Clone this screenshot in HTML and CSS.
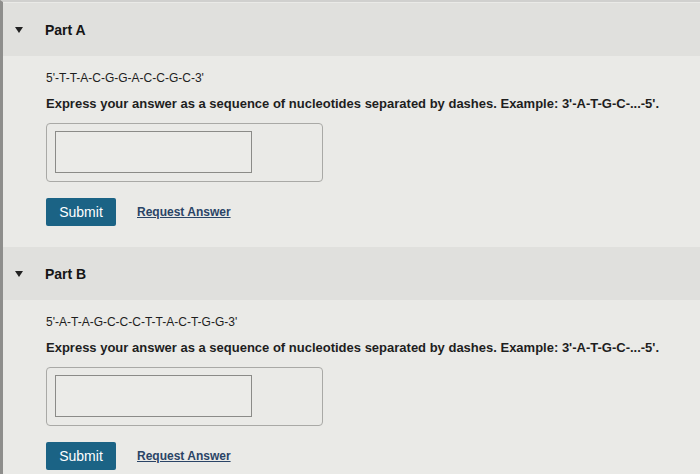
FILE: index.html
```html
<!DOCTYPE html>
<html lang="en">
<head>
    <meta charset="UTF-8">
    <meta name="viewport" content="width=device-width, initial-scale=1.0">
    <title>Parts A and B</title>
    <link rel="stylesheet" href="styles.css">
</head>
<body>
    <div class="page">
        <!-- Part A -->
        <section class="part">
            <div class="part-head">
                <span class="caret"></span>
                <h3>Part A</h3>
            </div>
            <div class="part-body">
                <p class="seq">5'-T-T-A-C-G-G-A-C-C-G-C-3'</p>
                <p class="prompt">Express your answer as a sequence of nucleotides separated by dashes. Example: 3'-A-T-G-C-...-5'.</p>
                <div class="answer-box">
                    <input type="text" class="answer">
                </div>
                <div class="actions">
                    <button class="submit-btn">Submit</button>
                    <a href="#" class="request">Request Answer</a>
                </div>
            </div>
        </section>

        <!-- Part B -->
        <section class="part">
            <div class="part-head">
                <span class="caret"></span>
                <h3>Part B</h3>
            </div>
            <div class="part-body">
                <p class="seq">5'-A-T-A-G-C-C-C-T-T-A-C-T-G-G-3'</p>
                <p class="prompt">Express your answer as a sequence of nucleotides separated by dashes. Example: 3'-A-T-G-C-...-5'.</p>
                <div class="answer-box">
                    <input type="text" class="answer">
                </div>
                <div class="actions">
                    <button class="submit-btn">Submit</button>
                    <a href="#" class="request">Request Answer</a>
                </div>
            </div>
        </section>
    </div>
</body>
</html>
```
FILE: styles.css
```css
body {
    margin: 0;
    padding: 0;
    font-family: "Liberation Sans", Arial, sans-serif;
    background: #eaeae7;
    color: #1e1e1e;
}

.page {
    border-left: 3px solid #8e8e8c;
    border-top: 2px solid #d0d0ce;
    min-height: 472px;
}

.part-head {
    display: flex;
    align-items: center;
    height: 53px;
    margin-top: 1px;
    padding-left: 12px;
    background: #e0e0dd;
}

.caret {
    width: 0;
    height: 0;
    border-left: 4px solid transparent;
    border-right: 4px solid transparent;
    border-top: 6px solid #222;
    margin-right: 22px;
}

.part-head h3 {
    margin: 0;
    font-size: 14px;
    font-weight: bold;
    color: #151515;
}

.part-body {
    padding: 13px 0 0 43px;
}

.seq {
    margin: 0;
    font-size: 12px;
    line-height: 18px;
}

.prompt {
    margin: 8px 0 0;
    font-size: 13px;
    font-weight: bold;
    line-height: 18px;
}

.answer-box {
    width: 259px;
    margin-top: 10px;
    padding: 7px 8px 8px;
    border: 1px solid #a9a9a6;
    border-radius: 4px;
}

.answer {
    display: block;
    width: 197px;
    height: 42px;
    box-sizing: border-box;
    border: 1px solid #8b8b88;
    background: #ebebe8;
}

.actions {
    display: flex;
    align-items: center;
    gap: 21px;
    margin-top: 16px;
    height: 28px;
}

.submit-btn {
    width: 70px;
    height: 28px;
    border: none;
    border-radius: 2px;
    background: #1b6385;
    color: #fff;
    font-family: inherit;
    font-size: 14px;
}

.request {
    color: #2a4466;
    font-size: 12px;
    font-weight: bold;
}

.part + .part .part-head {
    margin-top: 21px;
}
```
